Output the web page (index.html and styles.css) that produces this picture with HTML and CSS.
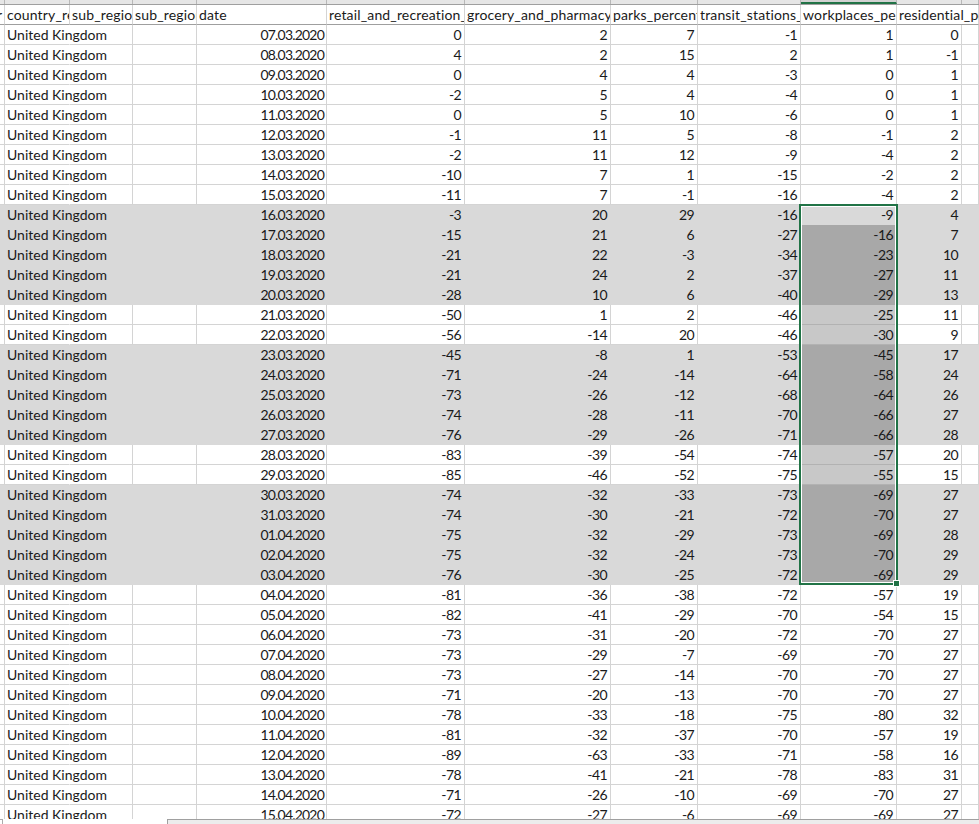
FILE: index.html
```html
<!DOCTYPE html>
<html lang="en">
<head>
<meta charset="utf-8">
<title>Mobility data</title>
<link rel="stylesheet" href="styles.css">
</head>
<body>
<div class="sheet">
  <div class="colbar">
    <span class="ch w0"></span><span class="ch w1"></span><span class="ch w2"></span><span class="ch w3"></span><span class="ch w4"></span><span class="ch w5"></span><span class="ch w6"></span><span class="ch w7"></span><span class="ch w8"></span><span class="ch w9 on"></span><span class="ch w10"></span><span class="ch w11"></span>
  </div>
  <div class="viewport">
    <table class="grid">
      <colgroup><col class="w0"><col class="w1"><col class="w2"><col class="w3"><col class="w4"><col class="w5"><col class="w6"><col class="w7"><col class="w8"><col class="w9"><col class="w10"><col class="w11"></colgroup>
      <thead><tr><th class="stub">r</th><th>country_region</th><th>sub_region_1</th><th>sub_region_2</th><th>date</th><th>retail_and_recreation_percent</th><th>grocery_and_pharmacy_percent</th><th>parks_percent_change</th><th>transit_stations_percent</th><th>workplaces_percent</th><th class="spill">residential_percent</th><th></th></tr></thead>
      <tbody>
<tr><td></td><td class="nm">United Kingdom</td><td></td><td></td><td class="n d">07.03.2020</td><td class="n">0</td><td class="n">2</td><td class="n">7</td><td class="n">-1</td><td class="n">1</td><td class="n">0</td><td></td></tr>
<tr><td></td><td class="nm">United Kingdom</td><td></td><td></td><td class="n d">08.03.2020</td><td class="n">4</td><td class="n">2</td><td class="n">15</td><td class="n">2</td><td class="n">1</td><td class="n">-1</td><td></td></tr>
<tr><td></td><td class="nm">United Kingdom</td><td></td><td></td><td class="n d">09.03.2020</td><td class="n">0</td><td class="n">4</td><td class="n">4</td><td class="n">-3</td><td class="n">0</td><td class="n">1</td><td></td></tr>
<tr><td></td><td class="nm">United Kingdom</td><td></td><td></td><td class="n d">10.03.2020</td><td class="n">-2</td><td class="n">5</td><td class="n">4</td><td class="n">-4</td><td class="n">0</td><td class="n">1</td><td></td></tr>
<tr><td></td><td class="nm">United Kingdom</td><td></td><td></td><td class="n d">11.03.2020</td><td class="n">0</td><td class="n">5</td><td class="n">10</td><td class="n">-6</td><td class="n">0</td><td class="n">1</td><td></td></tr>
<tr><td></td><td class="nm">United Kingdom</td><td></td><td></td><td class="n d">12.03.2020</td><td class="n">-1</td><td class="n">11</td><td class="n">5</td><td class="n">-8</td><td class="n">-1</td><td class="n">2</td><td></td></tr>
<tr><td></td><td class="nm">United Kingdom</td><td></td><td></td><td class="n d">13.03.2020</td><td class="n">-2</td><td class="n">11</td><td class="n">12</td><td class="n">-9</td><td class="n">-4</td><td class="n">2</td><td></td></tr>
<tr><td></td><td class="nm">United Kingdom</td><td></td><td></td><td class="n d">14.03.2020</td><td class="n">-10</td><td class="n">7</td><td class="n">1</td><td class="n">-15</td><td class="n">-2</td><td class="n">2</td><td></td></tr>
<tr><td></td><td class="nm">United Kingdom</td><td></td><td></td><td class="n d">15.03.2020</td><td class="n">-11</td><td class="n">7</td><td class="n">-1</td><td class="n">-16</td><td class="n">-4</td><td class="n">2</td><td></td></tr>
<tr class="g"><td></td><td class="nm">United Kingdom</td><td></td><td></td><td class="n d">16.03.2020</td><td class="n">-3</td><td class="n">20</td><td class="n">29</td><td class="n">-16</td><td class="n act">-9</td><td class="n">4</td><td></td></tr>
<tr class="g"><td></td><td class="nm">United Kingdom</td><td></td><td></td><td class="n d">17.03.2020</td><td class="n">-15</td><td class="n">21</td><td class="n">6</td><td class="n">-27</td><td class="n sel">-16</td><td class="n">7</td><td></td></tr>
<tr class="g"><td></td><td class="nm">United Kingdom</td><td></td><td></td><td class="n d">18.03.2020</td><td class="n">-21</td><td class="n">22</td><td class="n">-3</td><td class="n">-34</td><td class="n sel">-23</td><td class="n">10</td><td></td></tr>
<tr class="g"><td></td><td class="nm">United Kingdom</td><td></td><td></td><td class="n d">19.03.2020</td><td class="n">-21</td><td class="n">24</td><td class="n">2</td><td class="n">-37</td><td class="n sel">-27</td><td class="n">11</td><td></td></tr>
<tr class="g"><td></td><td class="nm">United Kingdom</td><td></td><td></td><td class="n d">20.03.2020</td><td class="n">-28</td><td class="n">10</td><td class="n">6</td><td class="n">-40</td><td class="n sel">-29</td><td class="n">13</td><td></td></tr>
<tr><td></td><td class="nm">United Kingdom</td><td></td><td></td><td class="n d">21.03.2020</td><td class="n">-50</td><td class="n">1</td><td class="n">2</td><td class="n">-46</td><td class="n sel">-25</td><td class="n">11</td><td></td></tr>
<tr><td></td><td class="nm">United Kingdom</td><td></td><td></td><td class="n d">22.03.2020</td><td class="n">-56</td><td class="n">-14</td><td class="n">20</td><td class="n">-46</td><td class="n sel">-30</td><td class="n">9</td><td></td></tr>
<tr class="g"><td></td><td class="nm">United Kingdom</td><td></td><td></td><td class="n d">23.03.2020</td><td class="n">-45</td><td class="n">-8</td><td class="n">1</td><td class="n">-53</td><td class="n sel">-45</td><td class="n">17</td><td></td></tr>
<tr class="g"><td></td><td class="nm">United Kingdom</td><td></td><td></td><td class="n d">24.03.2020</td><td class="n">-71</td><td class="n">-24</td><td class="n">-14</td><td class="n">-64</td><td class="n sel">-58</td><td class="n">24</td><td></td></tr>
<tr class="g"><td></td><td class="nm">United Kingdom</td><td></td><td></td><td class="n d">25.03.2020</td><td class="n">-73</td><td class="n">-26</td><td class="n">-12</td><td class="n">-68</td><td class="n sel">-64</td><td class="n">26</td><td></td></tr>
<tr class="g"><td></td><td class="nm">United Kingdom</td><td></td><td></td><td class="n d">26.03.2020</td><td class="n">-74</td><td class="n">-28</td><td class="n">-11</td><td class="n">-70</td><td class="n sel">-66</td><td class="n">27</td><td></td></tr>
<tr class="g"><td></td><td class="nm">United Kingdom</td><td></td><td></td><td class="n d">27.03.2020</td><td class="n">-76</td><td class="n">-29</td><td class="n">-26</td><td class="n">-71</td><td class="n sel">-66</td><td class="n">28</td><td></td></tr>
<tr><td></td><td class="nm">United Kingdom</td><td></td><td></td><td class="n d">28.03.2020</td><td class="n">-83</td><td class="n">-39</td><td class="n">-54</td><td class="n">-74</td><td class="n sel">-57</td><td class="n">20</td><td></td></tr>
<tr><td></td><td class="nm">United Kingdom</td><td></td><td></td><td class="n d">29.03.2020</td><td class="n">-85</td><td class="n">-46</td><td class="n">-52</td><td class="n">-75</td><td class="n sel">-55</td><td class="n">15</td><td></td></tr>
<tr class="g"><td></td><td class="nm">United Kingdom</td><td></td><td></td><td class="n d">30.03.2020</td><td class="n">-74</td><td class="n">-32</td><td class="n">-33</td><td class="n">-73</td><td class="n sel">-69</td><td class="n">27</td><td></td></tr>
<tr class="g"><td></td><td class="nm">United Kingdom</td><td></td><td></td><td class="n d">31.03.2020</td><td class="n">-74</td><td class="n">-30</td><td class="n">-21</td><td class="n">-72</td><td class="n sel">-70</td><td class="n">27</td><td></td></tr>
<tr class="g"><td></td><td class="nm">United Kingdom</td><td></td><td></td><td class="n d">01.04.2020</td><td class="n">-75</td><td class="n">-32</td><td class="n">-29</td><td class="n">-73</td><td class="n sel">-69</td><td class="n">28</td><td></td></tr>
<tr class="g"><td></td><td class="nm">United Kingdom</td><td></td><td></td><td class="n d">02.04.2020</td><td class="n">-75</td><td class="n">-32</td><td class="n">-24</td><td class="n">-73</td><td class="n sel">-70</td><td class="n">29</td><td></td></tr>
<tr class="g"><td></td><td class="nm">United Kingdom</td><td></td><td></td><td class="n d">03.04.2020</td><td class="n">-76</td><td class="n">-30</td><td class="n">-25</td><td class="n">-72</td><td class="n sel">-69</td><td class="n">29</td><td></td></tr>
<tr><td></td><td class="nm">United Kingdom</td><td></td><td></td><td class="n d">04.04.2020</td><td class="n">-81</td><td class="n">-36</td><td class="n">-38</td><td class="n">-72</td><td class="n">-57</td><td class="n">19</td><td></td></tr>
<tr><td></td><td class="nm">United Kingdom</td><td></td><td></td><td class="n d">05.04.2020</td><td class="n">-82</td><td class="n">-41</td><td class="n">-29</td><td class="n">-70</td><td class="n">-54</td><td class="n">15</td><td></td></tr>
<tr><td></td><td class="nm">United Kingdom</td><td></td><td></td><td class="n d">06.04.2020</td><td class="n">-73</td><td class="n">-31</td><td class="n">-20</td><td class="n">-72</td><td class="n">-70</td><td class="n">27</td><td></td></tr>
<tr><td></td><td class="nm">United Kingdom</td><td></td><td></td><td class="n d">07.04.2020</td><td class="n">-73</td><td class="n">-29</td><td class="n">-7</td><td class="n">-69</td><td class="n">-70</td><td class="n">27</td><td></td></tr>
<tr><td></td><td class="nm">United Kingdom</td><td></td><td></td><td class="n d">08.04.2020</td><td class="n">-73</td><td class="n">-27</td><td class="n">-14</td><td class="n">-70</td><td class="n">-70</td><td class="n">27</td><td></td></tr>
<tr><td></td><td class="nm">United Kingdom</td><td></td><td></td><td class="n d">09.04.2020</td><td class="n">-71</td><td class="n">-20</td><td class="n">-13</td><td class="n">-70</td><td class="n">-70</td><td class="n">27</td><td></td></tr>
<tr><td></td><td class="nm">United Kingdom</td><td></td><td></td><td class="n d">10.04.2020</td><td class="n">-78</td><td class="n">-33</td><td class="n">-18</td><td class="n">-75</td><td class="n">-80</td><td class="n">32</td><td></td></tr>
<tr><td></td><td class="nm">United Kingdom</td><td></td><td></td><td class="n d">11.04.2020</td><td class="n">-81</td><td class="n">-32</td><td class="n">-37</td><td class="n">-70</td><td class="n">-57</td><td class="n">19</td><td></td></tr>
<tr><td></td><td class="nm">United Kingdom</td><td></td><td></td><td class="n d">12.04.2020</td><td class="n">-89</td><td class="n">-63</td><td class="n">-33</td><td class="n">-71</td><td class="n">-58</td><td class="n">16</td><td></td></tr>
<tr><td></td><td class="nm">United Kingdom</td><td></td><td></td><td class="n d">13.04.2020</td><td class="n">-78</td><td class="n">-41</td><td class="n">-21</td><td class="n">-78</td><td class="n">-83</td><td class="n">31</td><td></td></tr>
<tr><td></td><td class="nm">United Kingdom</td><td></td><td></td><td class="n d">14.04.2020</td><td class="n">-71</td><td class="n">-26</td><td class="n">-10</td><td class="n">-69</td><td class="n">-70</td><td class="n">27</td><td></td></tr>
<tr><td></td><td class="nm">United Kingdom</td><td></td><td></td><td class="n d">15.04.2020</td><td class="n">-72</td><td class="n">-27</td><td class="n">-6</td><td class="n">-69</td><td class="n">-69</td><td class="n">27</td><td></td></tr>
      </tbody>
    </table>
    <div class="selection"><span class="handle"></span></div>
  </div>
  <div class="hscroll"><div class="corner"></div><div class="tab-gap"></div><div class="thumb"></div></div>
</div>
</body>
</html>
```

FILE: styles.css
```css
html, body { margin: 0; padding: 0; height: 100%; background: #fff; overflow: hidden; }
.sheet { width: 979px; height: 824px; display: flex; flex-direction: column; overflow: hidden; font-family: "Lato", "Liberation Sans", sans-serif; color: #1a1a1a; }
.colbar { display: flex; height: 4px; flex: none; background: #e6e6e6; border-bottom: 1px solid #9f9f9f; box-sizing: content-box; }
.ch { display: block; flex: none; box-sizing: border-box; border-right: 1px solid #b8b8b8; height: 4px; }
.ch.on { background: #d2d2d2; border-bottom: 2px solid #217346; }
.w0 { width: 5px; } .w1 { width: 65px; } .w2 { width: 63px; } .w3 { width: 64px; } .w4 { width: 130px; } .w5 { width: 138px; } .w6 { width: 146px; } .w7 { width: 87px; } .w8 { width: 103px; } .w9 { width: 96px; } .w10 { width: 65px; } .w11 { width: 17px; }
.viewport { position: relative; height: 814px; flex: none; overflow: hidden; }
.grid { border-collapse: separate; border-spacing: 0; table-layout: fixed; width: 979px; font-size: 14px; }
.grid th, .grid td { height: 20px; box-sizing: border-box; padding: 0 2px; border-right: 1px solid #d4d4d4; border-bottom: 1px solid #d4d4d4; overflow: hidden; white-space: nowrap; font-weight: 400; text-align: left; line-height: 19px; }
.grid th { border-bottom-color: #9f9f9f; letter-spacing: 0.15px; }
.grid th.stub { padding: 0; font-size: 14px; text-indent: -3px; }
.grid th.spill { overflow: visible; border-right: 0; }
.grid td.nm { overflow: visible; border-right-color: transparent; }
.grid td.n { text-align: right; letter-spacing: -0.6px; padding-right: 3px; }
.grid td.d { letter-spacing: -0.8px; padding-right: 2px; }
.g td, .g td.nm { background: #d9d9d9; border-color: #d9d9d9; }
.grid td.sel { background: #c8c8c8; border-color: #c8c8c8 #c8c8c8 #b2b2b2; }
.g td.sel { background: #a8a8a8; border-color: #a8a8a8; }
.grid td.act { background: #d9d9d9; }
.selection { position: absolute; left: 799px; top: 199px; width: 99px; height: 381px; box-sizing: border-box; border: 2px solid #217346; box-shadow: inset 0 0 0 1px #fff; }
.handle { position: absolute; right: -4px; bottom: -4px; width: 5px; height: 5px; background: #217346; border: 1px solid #fff; }
.hscroll { flex: 1; display: flex; background: #fff; }
.corner { width: 2px; flex: none; border-top: 1px solid #ababab; border-right: 1px solid #ababab; }
.tab-gap { width: 164px; flex: none; }
.thumb { flex: 1; background: #ececec; border-top: 1px solid #a0a0a0; border-left: 1px solid #a0a0a0; }
```
